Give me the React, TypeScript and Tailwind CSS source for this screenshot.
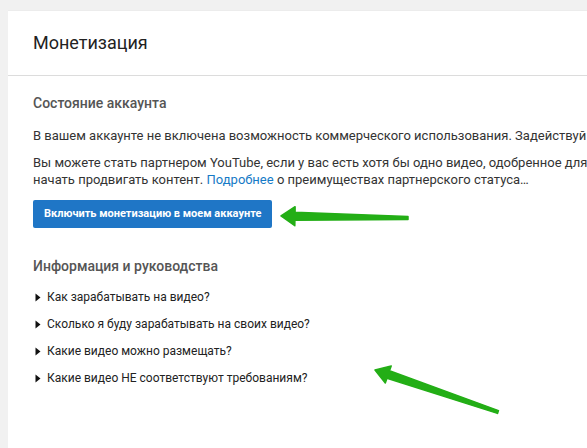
const arrowPoints = (
  tip: [number, number],
  tail: [number, number],
  headLen: number,
  headW: number,
  shaftW0: number,
  shaftW1: number
) => {
  const dx = tail[0] - tip[0];
  const dy = tail[1] - tip[1];
  const len = Math.hypot(dx, dy);
  const ux = dx / len;
  const uy = dy / len;
  const px = -uy;
  const py = ux;
  const bx = tip[0] + ux * headLen;
  const by = tip[1] + uy * headLen;
  const pts: [number, number][] = [
    tip,
    [bx + (px * headW) / 2, by + (py * headW) / 2],
    [bx + (px * shaftW0) / 2, by + (py * shaftW0) / 2],
    [tail[0] + (px * shaftW1) / 2, tail[1] + (py * shaftW1) / 2],
    [tail[0] - (px * shaftW1) / 2, tail[1] - (py * shaftW1) / 2],
    [bx - (px * shaftW0) / 2, by - (py * shaftW0) / 2],
    [bx - (px * headW) / 2, by - (py * headW) / 2],
  ];
  return pts.map((p) => p.map((v) => v.toFixed(1)).join(",")).join(" ");
};

const guides = [
  "Как зарабатывать на видео?",
  "Сколько я буду зарабатывать на своих видео?",
  "Какие видео можно размещать?",
  "Какие видео НЕ соответствуют требованиям?",
];

const Bullet = () => (
  <svg width="6" height="9" viewBox="0 0 6 9" className="shrink-0">
    <path d="M0.5 0.5 L5.5 4.5 L0.5 8.5 Z" fill="#111" />
  </svg>
);

export default function App() {
  return (
    <div
      className="relative w-[587px] h-[448px] overflow-hidden bg-[#f1f1f1] pl-[8px] pt-[10px]"
      style={{ fontFamily: "Roboto, 'Noto Sans', sans-serif" }}
    >
      <div className="h-full bg-white border-t border-[#ececec]">
        <div className="h-[65px] flex items-center px-[25px] border-b border-[#dcdcdc]">
          <h1 className="text-[18px] leading-[22px] text-[#222] whitespace-nowrap">Монетизация</h1>
        </div>

        <div className="pl-[25px] pt-[18px] whitespace-nowrap">
          <h2 className="text-[14px] leading-[18px] font-medium text-[#555]">Состояние аккаунта</h2>
          <p className="mt-[15px] text-[13px] leading-[17px] text-[#333]">
            В вашем аккаунте не включена возможность коммерческого использования. Задействуй
          </p>
          <p className="mt-[10px] text-[13px] leading-[17px] text-[#333]">
            Вы можете стать партнером YouTube, если у вас есть хотя бы одно видео, одобренное для
            <br />
            начать продвигать контент. <span className="text-[#167ac6]">Подробнее</span> о преимуществах партнерского статуса…
          </p>
          <button className="mt-[12px] h-[28px] px-[11px] rounded-[2px] bg-[#1f76c6] text-white text-[11px] font-bold">
            Включить монетизацию в моем аккаунте
          </button>

          <h2 className="mt-[29px] text-[14px] leading-[18px] font-medium text-[#555]">Информация и руководства</h2>
          <ul className="mt-[14px] flex flex-col gap-[10px]">
            {guides.map((g) => (
              <li key={g} className="flex items-center gap-[6px] pl-[2px] text-[12px] leading-[17px] text-[#222]">
                <Bullet />
                <span>{g}</span>
              </li>
            ))}
          </ul>
        </div>
      </div>

      <svg className="absolute inset-0 pointer-events-none" width="587" height="448">
        <polygon
          points={arrowPoints([281, 216], [408, 218], 14, 19, 8, 3)}
          fill="#23ae16"
          stroke="#23ae16"
          strokeWidth="1.5"
          strokeLinejoin="round"
        />
        <polygon
          points={arrowPoints([375, 370], [498, 412], 14, 18, 8, 3)}
          fill="#23ae16"
          stroke="#23ae16"
          strokeWidth="1.5"
          strokeLinejoin="round"
        />
      </svg>
    </div>
  );
}
